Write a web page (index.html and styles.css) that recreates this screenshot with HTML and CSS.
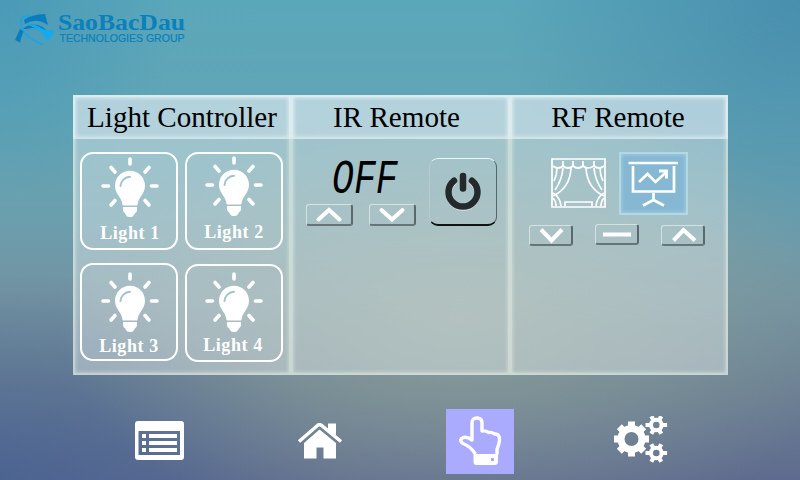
FILE: index.html
```
<!DOCTYPE html>
<html lang="en">
<head>
<meta charset="utf-8">
<title>Remote control</title>
<link rel="stylesheet" href="styles.css">
</head>
<body>
<svg width="0" height="0" class="defs">
  <defs>
    <symbol id="bulb" viewBox="0 0 60 60">
      <g stroke="#fff" stroke-width="3.6" stroke-linecap="round">
        <path d="M30 2v5M3 29h5.500M51.500 29h5.500M11 10.500l4 4.500M49 10.500l-4 4.500M11 48l4-4.500M49 48l-4-4.500"/>
      </g>
      <path fill="#fff" d="M30 13.800c-8.500 0-15 6.700-15 15 0 8 6.300 11 7.500 18.600.1.800.5 1.100 1.200 1.100h12.600c.7 0 1.100-.3 1.200-1.100C38.700 39.800 45 36.800 45 28.800c0-8.300-6.500-15-15-15z"/>
      <path class="glint" d="M20.500 29c.2-5 4.500-9 9.500-9.200"/>
      <path fill="#fff" d="M23 50h14v3.200q0 2-2 3l-1 1.800q-1 2-3 2h-2q-2 0-3-2l-1-1.800q-2-1-2-3z"/>
    </symbol>
    <g id="cog" fill="none" stroke="#fff">
      <circle r="10.500" stroke-width="7"/>
      <path stroke-width="7" d="M0-17.500v5M0 17.500v-5M-17.500 0h5M17.500 0h-5M-12.200-12.200l3.500 3.500M12.200-12.200l-3.500 3.500M-12.200 12.200l3.500-3.500M12.200 12.200l-3.500-3.500"/>
    </g>
    <g id="cog-small" fill="none" stroke="#fff">
      <circle r="5.300" stroke-width="4"/>
      <path stroke-width="4.200" d="M-10.800 0h5M10.800 0h-5M-5-8.700l2.500 4.300M5-8.700l-2.500 4.300M-5 8.700l2.500-4.300M5 8.700l-2.500-4.300"/>
    </g>
  </defs>
</svg>
<div class="screen">
  <header class="brand">
    <svg width="190" height="50" viewBox="0 0 190 50">
      <path fill="#087ec0" d="M24 20Q31 14.500 45 14l3 11Q36 17 25 24zM20 29l-5 11 5 2.500q2-9 4-11zM23 29q6-6 15-4 6 2 9 6l-1 2q-9-7-19-4z"/>
      <path fill="none" stroke="#14a5ee" stroke-width="1.600" d="M29 16q-8 0-8 5 0 10 8 16 6 5 14 7.500"/>
      <path fill="#14aaf0" d="M27 24.500q8-1 14 3.500 7 4 13 2-1 8-8 11-1-10-19-16.500z"/>
      <text class="brand-name" x="58" y="30" textLength="127" lengthAdjust="spacingAndGlyphs">SaoBacDau</text>
      <text class="brand-sub" x="59.500" y="41.500" textLength="125" lengthAdjust="spacingAndGlyphs">TECHNOLOGIES GROUP</text>
    </svg>
  </header>

  <main class="panels">
    <section class="panel">
      <h2 class="title">Light Controller</h2>
      <div class="lights">
        <button class="light"><svg width="60" height="60"><use href="#bulb"/></svg><span>Light 1</span></button>
        <button class="light light-2"><svg width="60" height="60"><use href="#bulb"/></svg><span>Light 2</span></button>
        <button class="light light-3"><svg width="60" height="60"><use href="#bulb"/></svg><span>Light 3</span></button>
        <button class="light light-4"><svg width="60" height="60"><use href="#bulb"/></svg><span>Light 4</span></button>
      </div>
    </section>
    <section class="panel">
      <h2 class="title title-ir">IR Remote</h2>
      <div class="ir">
        <div class="ir-left">
          <div class="display">OFF</div>
          <div class="ir-keys">
            <button class="key"><svg width="47" height="22"><path d="M12.500 15.500L23 6l10.500 9.500"/></svg></button>
            <button class="key"><svg width="47" height="22"><path d="M12.500 6L23 15.500 33.500 6"/></svg></button>
          </div>
        </div>
        <button class="power"><svg width="68" height="68" viewBox="0 0 68 68" fill="none" stroke-linecap="round"><path stroke="#d5e5e5" stroke-width="6" d="M24.500 23.500a14.300 14.300 0 1 0 19 0" transform="translate(0 1.200)"/><path stroke="#24292b" stroke-width="6.500" d="M25 22.700a14.500 14.500 0 1 0 18 0M34 18v12.500"/></svg></button>
      </div>
    </section>
    <section class="panel">
      <h2 class="title title-rf">RF Remote</h2>
      <div class="rf-modes">
        <button class="curtain"><svg width="55" height="50" viewBox="0 0 55 50" fill="none" stroke="#fff" stroke-width="1.700">
          <path d="M1 1h53v48H1zM12 3v6M22 3v6M32 3v6M43 3v6"/>
          <path d="M2 8q5 4 10 0 5 4 10 0 5 4 10 0 5 4 11 0 5 4 10 0"/>
          <path d="M20 10Q19 30 2 38M35 10q1 20 18 28M12 10Q11 22 4 32M43 10q1 12 8 22M6 10Q6 17 3 23M49 10q0 7 3 13"/>
          <path d="M2 35q7 4 8 13M53 35q-7 4-8 13M2 40q3 3 3 8M53 40q-3 3-3 8M14 48v-4h27v4"/>
        </svg></button>
        <button class="screen-mode"><svg width="69" height="63" viewBox="0 0 69 63" fill="none" stroke="#fff" stroke-width="2.700">
          <path d="M9.500 11h49.500M14 14v25.500h41V14"/>
          <path d="M20 30l8.500-8 8 8L48 19.500"/><path stroke-width="3" d="M40 19h7.500v7.500"/>
          <path d="M34.500 41v7L24 53.500M34.500 48L45 53.500"/>
        </svg></button>
      </div>
      <div class="rf-keys">
        <button class="key"><svg width="44" height="21"><path d="M12 4.500l10.500 11 10.500-11"/></svg></button>
        <button class="key key-stop"><svg width="44" height="21"><path d="M8 10.500h28"/></svg></button>
        <button class="key"><svg width="44" height="21"><path d="M12.500 15.500L22.500 5 34 15.500"/></svg></button>
      </div>
    </section>
  </main>

  <nav class="nav">
    <a><svg width="49" height="40" viewBox="0 0 49 40"><path fill="#fff" fill-rule="evenodd" d="M3 0h43q3 0 3 3v33q0 3-3 3H3q-3 0-3-3V3q0-3 3-3zM3.500 10v24h41.500V10z"/><path stroke="#fff" stroke-width="4" d="M7 15h4M14 15h28M7 22h4M14 22h28M7 29h4M14 29h28"/></svg></a>
    <a><svg width="46" height="36" viewBox="0 0 46 36"><path fill="#fff" d="M22.500 6.500L39 20v15.500H26.500V24.500H19.500v11H7V20z"/><path fill="none" stroke="#fff" stroke-width="3.500" d="M2 18.500L20.500 2.500q2-1.500 4 0L44 18.500"/><path fill="#fff" d="M31 .5h8V14l-8-7z"/></svg></a>
    <a class="nav-active"><svg width="68" height="65" viewBox="0 0 68 65"><path fill="none" stroke="#fff" stroke-width="3.400" stroke-linejoin="round" d="M29.500 45Q24 37 17 34.500q-3.500-2-1.500-5 4-3 10.500 1.500V14q0-5 5-5t5 5v8q4-.5 6.500 1.500 3.500-.5 6 1.500 5.500-.5 5 6.500-.5 4-2.500 9v5"/><path fill="#fff" fill-rule="evenodd" d="M27.500 45h24.500v8q0 3-3 3H30.500q-3 0-3-3zM45 49v3h3v-3z"/></svg></a>
    <a><svg width="54" height="50" viewBox="0 0 54 50"><use href="#cog" x="17.500" y="23"/><use href="#cog-small" x="42.300" y="9"/><use href="#cog-small" x="42.300" y="37"/></svg></a>
  </nav>
</div>
</body>
</html>
```
FILE: styles.css
```
* { box-sizing: border-box; }
body { margin: 0; }
.defs { position: absolute; }
button { appearance: none; background: none; border: 0; padding: 0; margin: 0; font: inherit; color: inherit; }
svg { display: block; flex: none; }

.screen {
  width: 800px;
  height: 480px;
  display: flex;
  flex-direction: column;
  overflow: hidden;
  font-family: "Liberation Serif", serif;
  background:
    radial-gradient(ellipse 400px 230px at 460px 320px, rgba(144,164,155,.8), rgba(144,164,155,0)),
    radial-gradient(ellipse 300px 260px at 100% 0, rgba(62,130,168,.65), rgba(62,130,168,0)),
    radial-gradient(ellipse 340px 210px at 0 100%, rgba(66,96,148,.65), rgba(66,96,148,0)),
    radial-gradient(ellipse 180px 200px at 0 0, rgba(62,145,182,.6), rgba(62,145,182,0)),
    linear-gradient(#5ba7ba, #61a5b5 25%, #6b9fae 45%, #7393a1 62%, #6b8093 80%, #5f6b8e);
}

.brand { height: 95px; }
.brand-name { font: bold 24px "Liberation Serif", serif; fill: #0a80bd; }
.brand-sub { font: 10.500px "Liberation Sans", sans-serif; fill: #0a80bd; stroke: #0a80bd; stroke-width: .2; }

.panels {
  display: grid;
  grid-template-columns: 218px 219px 218px;
  width: 655px;
  height: 280px;
  margin-left: 73px;
}
.panel {
  background: rgba(231,238,238,.43);
  border: 2px solid rgba(235,244,232,.5);
  box-shadow: inset 0 0 4px rgba(240,248,235,.6);
}
.title {
  margin: -2px;
  height: 44px;
  padding-top: 4px;
  text-align: center;
  font-size: 29.100px;
  line-height: 32px;
  font-weight: 400;
  color: #000;
  background: rgba(218,232,244,.38);
  border: 2px solid rgba(240,249,248,.45);
  box-shadow: inset 0 0 5px rgba(240,250,250,.6);
}
.title-ir { padding-right: 8px; }
.title-rf { padding-right: 2px; }

.lights {
  display: grid;
  grid-template-columns: 98px 98px;
  grid-auto-rows: 98px;
  gap: 13px 7px;
  padding: 15px 0 0 5px;
}
.light {
  display: flex;
  flex-direction: column;
  align-items: center;
  border: 2px solid #fff;
  border-radius: 13px;
  padding: 3px 0 0 2px;
  color: #fff;
  font-weight: bold;
  font-size: 18px;
  line-height: 20px;
  letter-spacing: .6px;
}
.light span { margin-top: 6px; }
.light-2 { padding: 2px 0 0; }
.light-3 { padding-top: 7px; }
.light-3 span { margin: 4px 2px 0 0; }
.light-4 { padding: 6px 0 0; margin: 1px 0 -1px; }
.light-4 span { margin: 3px 2px 0 0; }
.glint { fill: none; stroke: #a2c3cd; stroke-width: 2; stroke-linecap: round; }

.ir { display: flex; gap: 13px; padding: 21px 0 0 13px; }
.ir-left { width: 110px; }
.display {
  height: 46px;
  padding-top: 4px;
  margin-left: 26px;
  width: 90px;
  font: italic 48px/36px "Liberation Mono", monospace;
  color: #000;
  transform: scaleX(.76);
  transform-origin: 0 0;
}
.ir-keys { display: flex; gap: 16px; }
.key {
  border: 1px solid #d4e2e2;
  border-right: 2px solid #5c696c;
  border-bottom: 2px solid #687578;
  border-radius: 3px;
  overflow: hidden;
}
.key svg { margin: -1px -2px -2px -1px; fill: none; stroke: #fff; stroke-width: 4; }
.ir-keys svg { stroke-linecap: round; }
.power {
  width: 68px;
  height: 68px;
  border: 1.500px solid;
  border-color: #eef6f6 #55676a #111 #b9caca;
  border-bottom-width: 2px;
  border-radius: 9px;
}
.power svg { margin: -1px; }

.rf-modes { display: flex; gap: 13px; padding: 15px 0 0 39px; }
.curtain { padding-top: 0; margin-top: -1px; }
.screen-mode {
  width: 69px;
  height: 63px;
  background: #86b8d3;
  border: 2px solid #b3d8e5;
  box-shadow: inset 0 0 4px #aed5e3;
}
.screen-mode svg { margin: -2px; }
.rf-keys { display: flex; gap: 20px; padding: 10px 0 0 17px; }
.key-stop { margin: -1px 2px 1px; }

.nav { display: flex; align-items: center; height: 105px; padding: 27px 0 0 135px; }
.nav a:nth-child(2) { margin-left: 113px; }
.nav .nav-active { margin-left: 103px; background: #aaabff; }
.nav a:nth-child(4) { margin-left: 100px; }
```
